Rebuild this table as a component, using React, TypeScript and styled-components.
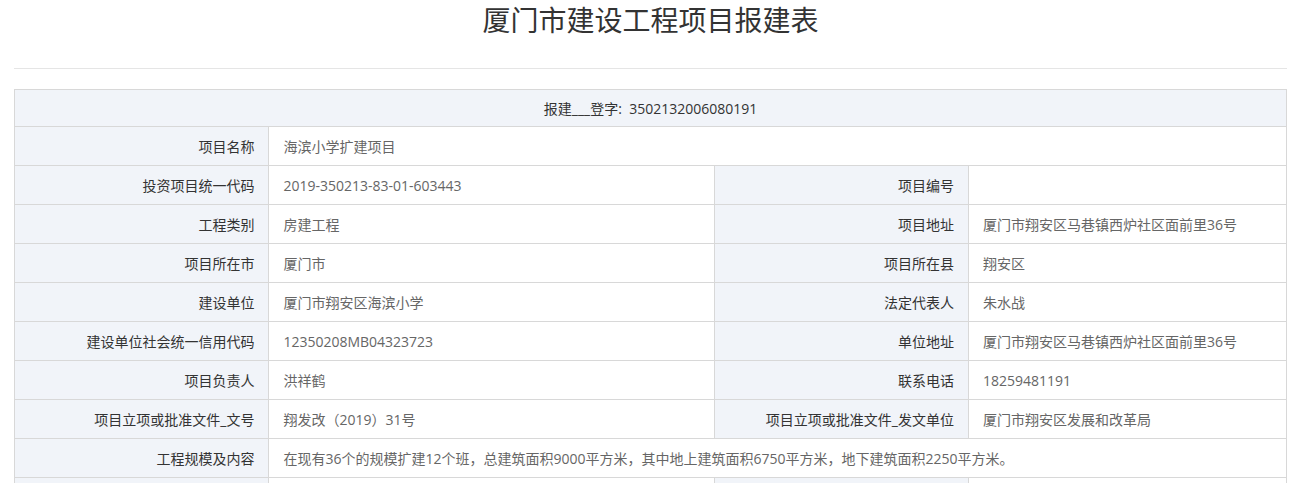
import React from "react";
import styled, { createGlobalStyle } from "styled-components";

const GlobalStyle = createGlobalStyle`
  html, body {
    margin: 0;
    padding: 0;
    background: #ffffff;
  }
  body {
    font-family: "Open Sans", "Noto Sans CJK SC", sans-serif;
    color: #333333;
  }
`;

const Page = styled.div`
  padding: 0 14px;
`;

const Title = styled.h1`
  margin: 0;
  height: 39px;
  line-height: 39px;
  font-family: "Noto Sans CJK SC", sans-serif;
  font-size: 28px;
  font-weight: normal;
  text-align: center;
  color: #333333;
`;

const Divider = styled.hr`
  margin: 29px 0 20px;
  border: 0;
  border-top: 1px solid #e5e5e5;
  height: 0;
`;

const Table = styled.table`
  width: 100%;
  border-collapse: collapse;
  table-layout: fixed;
  font-size: 14px;
`;

const Col = styled.col<{ $w: string }>`
  width: ${(p) => p.$w};
`;

const HeadCell = styled.td`
  height: 36px;
  padding: 0 14px;
  border: 1px solid #d8d8d8;
  background: #f1f4f9;
  color: #333333;
  text-align: center;
  vertical-align: middle;
`;

const LabelCell = styled.td`
  height: 38px;
  padding: 0 14px;
  border: 1px solid #d8d8d8;
  background: #f1f4f9;
  color: #333333;
  text-align: right;
  vertical-align: middle;
  white-space: nowrap;
`;

const ValueCell = styled.td`
  height: 38px;
  padding: 0 14px;
  border: 1px solid #d8d8d8;
  background: #ffffff;
  color: #666666;
  text-align: left;
  vertical-align: middle;
  white-space: nowrap;
`;

type Pair = [string, string];

const rows: (Pair | [Pair, Pair])[] = [
  ["项目名称", "海滨小学扩建项目"],
  [
    ["投资项目统一代码", "2019-350213-83-01-603443"],
    ["项目编号", ""],
  ],
  [
    ["工程类别", "房建工程"],
    ["项目地址", "厦门市翔安区马巷镇西炉社区面前里36号"],
  ],
  [
    ["项目所在市", "厦门市"],
    ["项目所在县", "翔安区"],
  ],
  [
    ["建设单位", "厦门市翔安区海滨小学"],
    ["法定代表人", "朱水战"],
  ],
  [
    ["建设单位社会统一信用代码", "12350208MB04323723"],
    ["单位地址", "厦门市翔安区马巷镇西炉社区面前里36号"],
  ],
  [
    ["项目负责人", "洪祥鹤"],
    ["联系电话", "18259481191"],
  ],
  [
    ["项目立项或批准文件_文号", "翔发改（2019）31号"],
    ["项目立项或批准文件_发文单位", "厦门市翔安区发展和改革局"],
  ],
  [
    "工程规模及内容",
    "在现有36个的规模扩建12个班，总建筑面积9000平方米，其中地上建筑面积6750平方米，地下建筑面积2250平方米。",
  ],
  [
    ["", ""],
    ["", ""],
  ],
];

export default function App() {
  return (
    <>
      <GlobalStyle />
      <Page>
        <Title>厦门市建设工程项目报建表</Title>
        <Divider />
        <Table>
          <colgroup>
            <Col $w="20%" />
            <Col $w="35%" />
            <Col $w="20%" />
            <Col $w="25%" />
          </colgroup>
          <tbody>
            <tr>
              <HeadCell colSpan={4}>报建___登字:&nbsp;&nbsp;3502132006080191</HeadCell>
            </tr>
            {rows.map((r, i) => {
              if (typeof r[0] === "string") {
                const [label, value] = r as Pair;
                return (
                  <tr key={i}>
                    <LabelCell>{label}</LabelCell>
                    <ValueCell colSpan={3}>{value}</ValueCell>
                  </tr>
                );
              }
              const [a, b] = r as [Pair, Pair];
              return (
                <tr key={i}>
                  <LabelCell>{a[0]}</LabelCell>
                  <ValueCell>{a[1]}</ValueCell>
                  <LabelCell>{b[0]}</LabelCell>
                  <ValueCell>{b[1]}</ValueCell>
                </tr>
              );
            })}
          </tbody>
        </Table>
      </Page>
    </>
  );
}
